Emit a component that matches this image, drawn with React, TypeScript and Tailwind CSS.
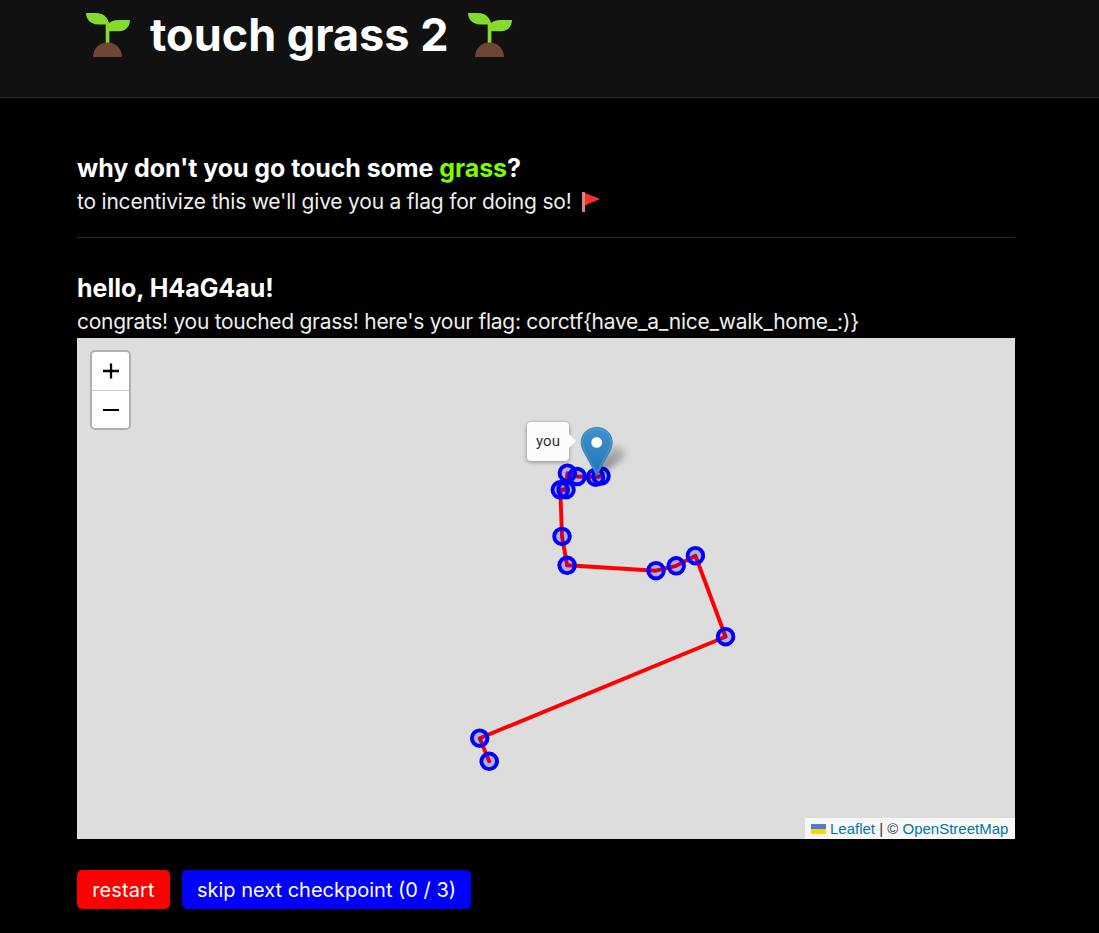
const points: [number, number][] = [
  [412.2, 423.3],
  [402.7, 400.2],
  [648.6, 298.7],
  [618.4, 217.7],
  [599.2, 227.8],
  [579, 232.7],
  [490.1, 227.3],
  [485, 198.4],
  [483.3, 151.8],
  [489, 151.7],
  [490.4, 135.2],
  [500.1, 138.5],
  [518.6, 139.2],
  [524, 138],
];

function Seedling() {
  return (
    <svg viewBox="0 0 44 44" className="size-[44px] shrink-0">
      <path d="M0 0H10C17 0 21.500 4 23 10C25.500 8 28.500 7 32 7H44C44 13.500 39.500 18.300 33 18.300H23.400V30H19.700V11.500H12C5 11.500 0 6.500 0 0Z" fill="#85db2d" />
      <path d="M7 44C7 35.500 13.500 29.500 21.500 29.500S36 35.500 36 44Z" fill="#6f4636" />
    </svg>
  );
}

function Flag() {
  return (
    <svg viewBox="0 0 18 20" className="h-5 w-[18px] shrink-0">
      <path d="M3 1L18 7L3 13.500Z" fill="#f8312f" />
      <path d="M0 0H3V20H0Z" fill="#d3867b" />
    </svg>
  );
}

function Marker() {
  return (
    <svg viewBox="0 0 70 60" className="absolute left-[498px] top-[84px] h-[60px] w-[70px]">
      <defs>
        <linearGradient id="pin" x1="0" y1="0" x2="0" y2="1">
          <stop offset="0" stopColor="#3e92cf" />
          <stop offset="1" stopColor="#2474b5" />
        </linearGradient>
        <linearGradient id="shade" x1="0" y1="1" x2="1" y2="0">
          <stop offset="0" stopColor="#000" stopOpacity=".5" />
          <stop offset="1" stopColor="#000" stopOpacity=".1" />
        </linearGradient>
        <filter id="soft" x="-30%" y="-30%" width="160%" height="160%">
          <feGaussianBlur stdDeviation="3" />
        </filter>
      </defs>
      <path d="M22 53C27 41 31 30 38 25C47 21 54 29 48 37C42 43 33 46 22 53Z" fill="url(#shade)" filter="url(#soft)" />
      <path d="M21.700 5.500C12.500 5.500 6.200 12 6.200 20.500C6.200 26 9 30 12 35.500L21.700 53.500L31.400 35.500C34.400 30 37.200 26 37.200 20.500C37.200 12 30.900 5.500 21.700 5.500Z" fill="url(#pin)" stroke="#3a80b4" strokeWidth="1" />
      <path d="M21.700 6.800C13.500 6.800 7.500 12.500 7.500 20.500C7.500 25.500 10 29.300 13 34.700L21.700 50.700L30.400 34.700C33.400 29.300 35.900 25.500 35.900 20.500C35.900 12.500 29.900 6.800 21.700 6.800Z" fill="none" stroke="#67abd9" strokeOpacity=".45" strokeWidth="1.200" />
      <circle cx="21.700" cy="20.500" r="5.700" fill="#fff" stroke="#2e78ad" strokeWidth=".6" />
    </svg>
  );
}

function RouteMap() {
  return (
    <div className="relative h-[501px] w-[938px] overflow-hidden bg-[#ddd]">
      <svg viewBox="0 0 938 501" className="absolute inset-0 h-full w-full">
        <polyline points={points.map((p) => p.join(",")).join(" ")} fill="none" stroke="red" strokeWidth="3.900" strokeLinecap="round" strokeLinejoin="round" />
        {points.map(([x, y], i) => (
          <circle key={i} cx={x} cy={y} r="7.800" fill="#00f" fillOpacity=".2" stroke="#00f" strokeWidth="3.900" />
        ))}
      </svg>
      <Marker />
      <div className="absolute left-[450px] top-[84px] flex h-[39px] w-[42px] items-center justify-center rounded-[4px] bg-[#fcfcfc] font-['Roboto'] text-[15px] text-[#333] shadow-[0_1px_4px_rgba(0,0,0,0.4)]">
        you
        <svg viewBox="0 0 7 14" className="absolute left-[42px] top-[12px] h-[14px] w-[7px]">
          <path d="M0 0L7 7L0 14Z" fill="#fcfcfc" />
        </svg>
      </div>
      <div className="absolute left-[13px] top-[12px] h-[80px] w-[41px] rounded-[5px] border-2 border-[#b0b0b0] bg-white">
        <button className="flex h-[39px] w-full items-center justify-center border-b border-[#ccc] pl-px" aria-label="Zoom in">
          <svg viewBox="0 0 16 16" className="size-4"><path d="M0 8H16M8 0.500V15.500" stroke="#000" strokeWidth="2.300" /></svg>
        </button>
        <button className="flex h-[37px] w-full items-center justify-center pl-px" aria-label="Zoom out">
          <svg viewBox="0 0 16 16" className="size-4"><path d="M0 8H16" stroke="#000" strokeWidth="2" /></svg>
        </button>
      </div>
      <div className="absolute bottom-0 right-0 flex h-[21px] w-[210px] items-center whitespace-pre bg-[#f7f7f7] pl-1.5 pt-px font-['Liberation_Sans'] text-[15px] text-[#333]">
        <svg viewBox="0 0 15 10" className="mr-1 h-[10px] w-[15px]">
          <path d="M0 0H15V5H0Z" fill="#4c7be1" />
          <path d="M0 5H15V10H0Z" fill="#ffd500" />
        </svg>
        <span className="text-[#0078a8]">Leaflet</span>
        <span> | © </span>
        <span className="text-[#0078a8]">OpenStreetMap</span>
      </div>
    </div>
  );
}

export default function App() {
  return (
    <div className="h-[933px] overflow-hidden bg-black font-['Inter',sans-serif] text-[#eee]">
      <header className="h-[98px] border-b border-[#2a2a2a] bg-[#111] pl-[86px] pt-[7px]">
        <h1 className="flex h-[56px] items-center whitespace-nowrap text-[45px] font-bold text-white">
          <Seedling />
          <span className="ml-5 mr-5 w-[298px]">touch grass 2</span>
          <Seedling />
        </h1>
      </header>
      <main className="w-[1015px] pl-[77px] pt-[53px]">
        <h2 className="h-[34px] whitespace-nowrap text-[25px] font-bold leading-[35px] tracking-[-0.08px] text-white">
          why don't you go touch some <span className="text-[#7cfc00]">grass</span>?
        </h2>
        <p className="flex h-[33px] items-center whitespace-nowrap text-[21px] tracking-[-0.21px]">
          <span className="mr-[11px]">to incentivize this we'll give you a flag for doing so!</span>
          <Flag />
        </p>
        <hr className="mt-[19px] border-[#2a2a2a]" />
        <h2 className="mt-[33px] h-[35px] whitespace-nowrap text-[25px] font-bold leading-[35px] tracking-[-0.03px] text-white">hello, H4aG4au!</h2>
        <p className="h-[32px] whitespace-nowrap text-[21px] leading-[31px] tracking-[-0.28px]">
          congrats! you touched grass! here's your flag: corctf{"{"}have_a_nice_walk_home_:){"}"}
        </p>
        <RouteMap />
        <div className="mt-[31px] flex gap-3 text-[20px] text-white">
          <button className="h-[39px] w-[93px] whitespace-nowrap rounded-[5px] bg-[#f00] tracking-[0.1px]">restart</button>
          <button className="h-[39px] w-[289px] whitespace-nowrap rounded-[5px] bg-[#00f]">skip next checkpoint (0 / 3)</button>
        </div>
      </main>
    </div>
  );
}
